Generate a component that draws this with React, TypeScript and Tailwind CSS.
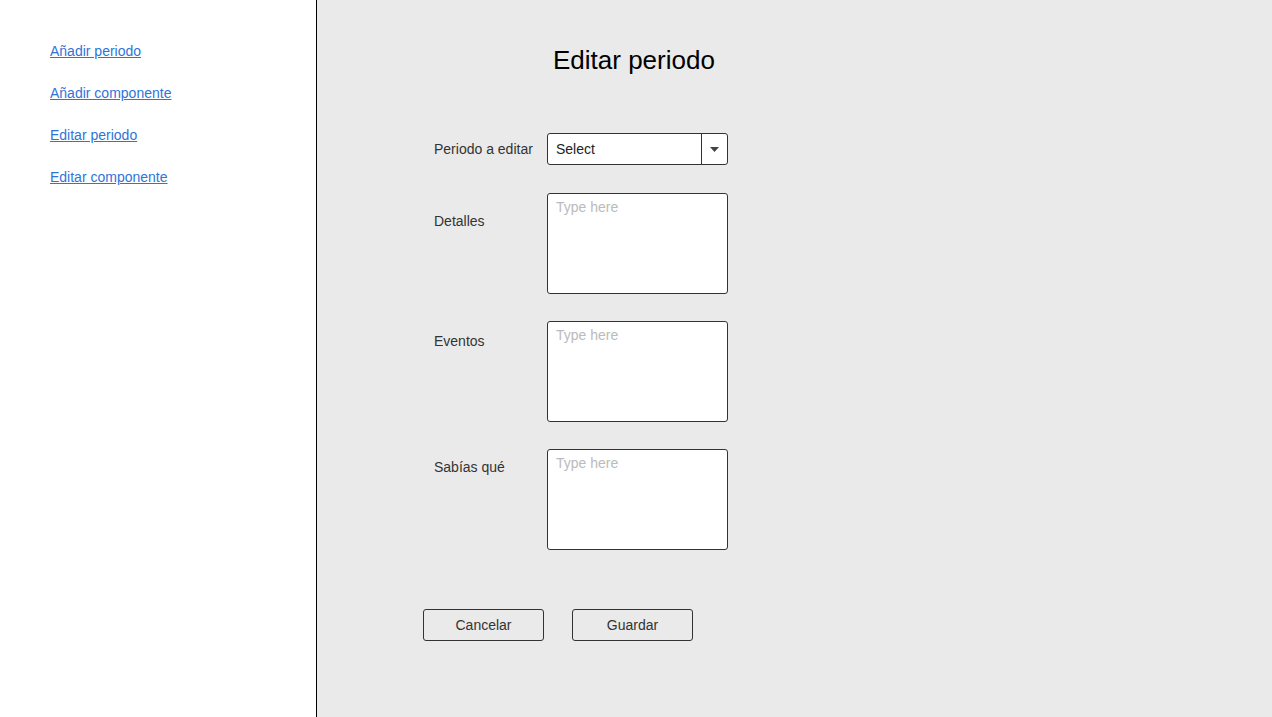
import React, { FC } from "react";

const links = ["Añadir periodo", "Añadir componente", "Editar periodo", "Editar componente"];

const TextBox: FC = () => (
  <textarea
    placeholder="Type here"
    className="w-[181px] h-[101px] bg-white border border-[#333] rounded-[3px] px-2 pt-[4px] text-[14px] leading-[18px] text-[#333] placeholder:text-[#bbb] resize-none outline-none"
  />
);

const App: FC = () => {
  return (
    <div className="flex h-[717px] w-full font-['Liberation_Sans',Arial,sans-serif]">
      <div className="w-[317px] shrink-0 bg-white border-r border-black flex flex-col gap-[26px] pl-[50px] pt-[43px]">
        {links.map((l) => (
          <a key={l} href="#" className="text-[14px] leading-[16px] text-[#2f74d8] underline">
            {l}
          </a>
        ))}
      </div>
      <div className="flex-1 bg-[#eaeaea] pl-[117px]">
        <h1 className="mt-[45px] ml-[119px] text-[26px] leading-[30px] text-black">Editar periodo</h1>

        <div className="mt-[58px] flex items-center">
          <span className="w-[113px] text-[14px] leading-[16px] text-[#333]">Periodo a editar</span>
          <div className="w-[181px] h-[32px] bg-white border border-[#333] rounded-[3px] flex items-center">
            <span className="flex-1 pl-2 text-[14px] text-[#222]">Select</span>
            <div className="w-[26px] h-full border-l border-[#333] flex items-center justify-center">
              <svg width="9" height="5" viewBox="0 0 9 5">
                <path d="M0 0 L9 0 L4.5 5 Z" fill="#444" />
              </svg>
            </div>
          </div>
        </div>

        <div className="mt-[28px] flex">
          <span className="w-[113px] pt-[20px] text-[14px] leading-[16px] text-[#333]">Detalles</span>
          <TextBox />
        </div>

        <div className="mt-[27px] flex">
          <span className="w-[113px] pt-[12px] text-[14px] leading-[16px] text-[#333]">Eventos</span>
          <TextBox />
        </div>

        <div className="mt-[27px] flex">
          <span className="w-[113px] pt-[10px] text-[14px] leading-[16px] text-[#333]">Sabías qué</span>
          <TextBox />
        </div>

        <div className="mt-[59px] -ml-[11px] flex gap-[28px]">
          <button className="w-[121px] h-[32px] border border-[#333] rounded-[3px] text-[14px] text-[#333] bg-transparent">
            Cancelar
          </button>
          <button className="w-[121px] h-[32px] border border-[#333] rounded-[3px] text-[14px] text-[#333] bg-transparent">
            Guardar
          </button>
        </div>
      </div>
    </div>
  );
};

export default App;
